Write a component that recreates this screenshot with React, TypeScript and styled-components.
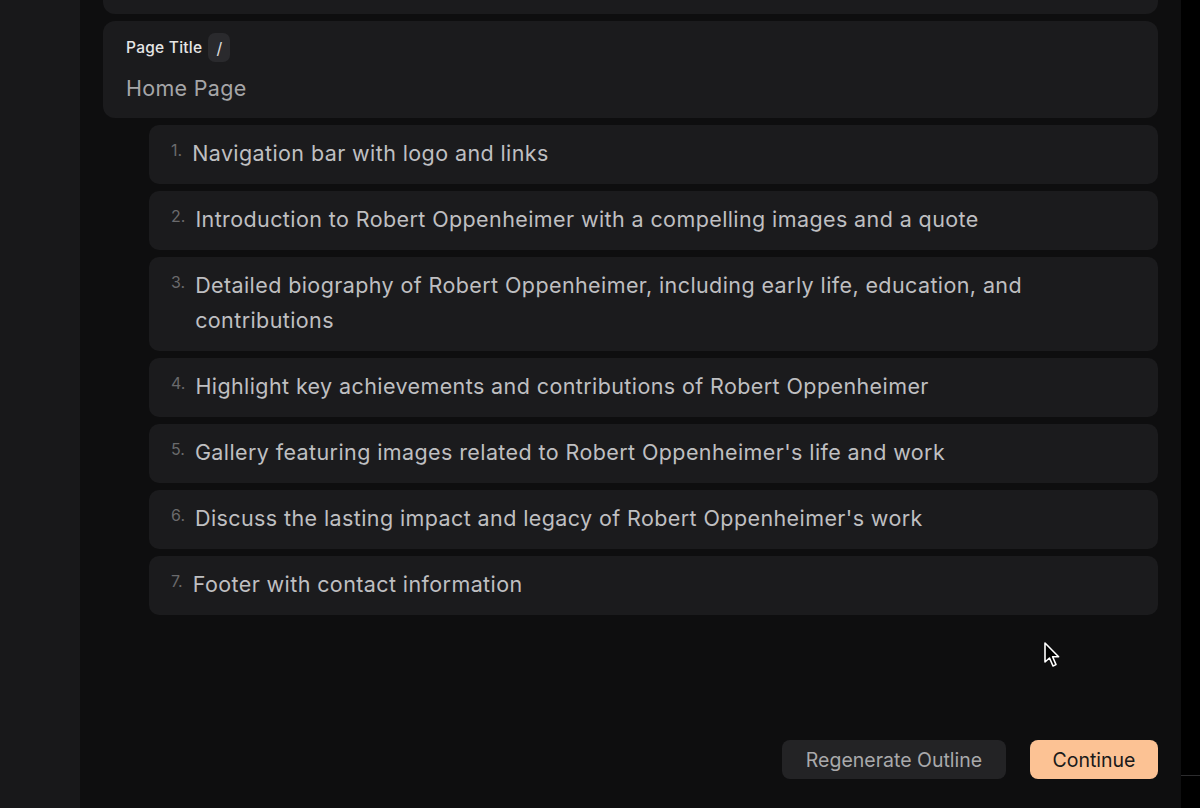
import React from 'react';
import styled, { createGlobalStyle } from 'styled-components';

const sections: string[] = [
  'Navigation bar with logo and links',
  'Introduction to Robert Oppenheimer with a compelling images and a quote',
  'Detailed biography of Robert Oppenheimer, including early life, education, and contributions',
  'Highlight key achievements and contributions of Robert Oppenheimer',
  "Gallery featuring images related to Robert Oppenheimer's life and work",
  "Discuss the lasting impact and legacy of Robert Oppenheimer's work",
  'Footer with contact information',
];

const App = (): JSX.Element => {
  return (
    <>
      <GlobalStyle />
      <Layout>
        <Sidebar />
        <Main>
          <Stack>
            <TopCard />
            <PageCard>
              <LabelRow>
                <Label>Page Title</Label>
                <SlugBadge>/</SlugBadge>
              </LabelRow>
              <PageName>Home Page</PageName>
            </PageCard>
            <OutlineList>
              {sections.map((text, i) => (
                <OutlineItem key={i}>
                  <ItemNumber>{i + 1}.</ItemNumber>
                  <ItemText>{text}</ItemText>
                </OutlineItem>
              ))}
            </OutlineList>
          </Stack>
          <Actions>
            <SecondaryButton>Regenerate Outline</SecondaryButton>
            <PrimaryButton>Continue</PrimaryButton>
          </Actions>
          <Cursor width="20" height="28" viewBox="0 0 20 28">
            <path
              d="M2 2 L2 21 L6.5 17 L10 25 L13 23.6 L9.6 15.8 L15.6 15.8 Z"
              fill="#000"
              stroke="#fff"
              strokeWidth="1.6"
              strokeLinejoin="round"
            />
          </Cursor>
        </Main>
        <Edge>
          <EdgeLine />
        </Edge>
      </Layout>
    </>
  );
};

export default App;

const GlobalStyle = createGlobalStyle`
  html, body {
    margin: 0;
    padding: 0;
    background: #0e0e0f;
    font-family: Inter, "Liberation Sans", sans-serif;
  }
  * {
    box-sizing: border-box;
  }
`;

const Layout = styled.div`
  display: flex;
  width: 1200px;
  height: 808px;
  overflow: hidden;
`;

const Sidebar = styled.aside`
  width: 80px;
  flex-shrink: 0;
  background: #18181a;
`;

const Main = styled.main`
  position: relative;
  flex: 1;
  display: flex;
  flex-direction: column;
  background: #0e0e0f;
  padding: 0 23px 29px 23px;
`;

const Stack = styled.div`
  display: flex;
  flex-direction: column;
  gap: 7px;
`;

const TopCard = styled.div`
  height: 14px;
  background: #1b1b1d;
  border-radius: 0 0 12px 12px;
`;

const PageCard = styled.section`
  height: 97px;
  background: #1b1b1d;
  border-radius: 12px;
  padding: 12px 23px 0;
`;

const LabelRow = styled.div`
  display: flex;
  align-items: center;
  gap: 6px;
  height: 29px;
`;

const Label = styled.span`
  color: #e6e6e6;
  font-size: 15.5px;
  font-weight: 500;
  letter-spacing: 0.25px;
`;

const SlugBadge = styled.span`
  display: inline-flex;
  align-items: center;
  justify-content: center;
  width: 22px;
  height: 29px;
  border-radius: 7px;
  background: #2a2a2d;
  color: #e0e0e0;
  font-size: 16px;
`;

const PageName = styled.div`
  margin-top: 12px;
  color: #a6a6a8;
  font-size: 21.5px;
  line-height: 28px;
  letter-spacing: 0.3px;
`;

const OutlineList = styled.ol`
  list-style: none;
  margin: 0;
  padding: 0 0 0 46px;
  display: flex;
  flex-direction: column;
  gap: 7px;
`;

const OutlineItem = styled.li`
  display: flex;
  align-items: flex-start;
  gap: 10px;
  background: #1b1b1d;
  border-radius: 10px;
  padding: 11px 23px 13px 22px;
`;

const ItemNumber = styled.span`
  color: #6a6a6c;
  font-size: 16px;
  line-height: 29px;
  flex-shrink: 0;
`;

const ItemText = styled.span`
  color: #bfbfc1;
  font-size: 21.5px;
  line-height: 35px;
  letter-spacing: 0.4px;
`;

const Actions = styled.div`
  margin-top: auto;
  display: flex;
  justify-content: flex-end;
  gap: 24px;
`;

const Button = styled.button`
  height: 39px;
  border: none;
  border-radius: 8px;
  font-family: Inter, "Liberation Sans", sans-serif;
  font-size: 19.5px;
  cursor: pointer;
`;

const SecondaryButton = styled(Button)`
  width: 224px;
  background: #232325;
  color: #a9a9ab;
`;

const PrimaryButton = styled(Button)`
  width: 128px;
  background: #fcc294;
  color: #1a1a1a;
`;

const Cursor = styled.svg`
  position: absolute;
  left: 963px;
  top: 641px;
`;

const Edge = styled.div`
  width: 19px;
  flex-shrink: 0;
  background: #000;
  padding-top: 775px;
`;

const EdgeLine = styled.div`
  height: 1px;
  background: #2c2c2e;
`;
